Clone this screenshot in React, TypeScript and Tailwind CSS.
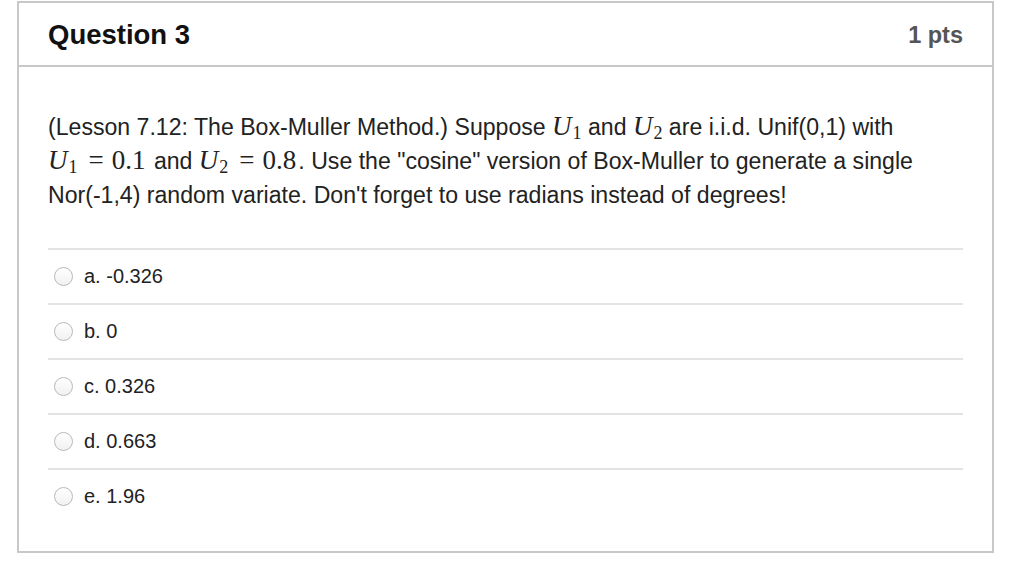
import React from "react";

const answers = ["a. -0.326", "b. 0", "c. 0.326", "d. 0.663", "e. 1.96"];

const Var: React.FC<{ sub: string }> = ({ sub }) => (
  <span className="font-['Liberation_Serif',serif] text-[27px] leading-none">
    <i>U</i>
    <sub className="text-[18px] relative top-[4px] align-baseline ml-[1px]">{sub}</sub>
  </span>
);

const Eq: React.FC<{ value: string }> = ({ value }) => (
  <span className="font-['Liberation_Serif',serif] text-[27px] leading-none mr-[2px]">
    <span className="ml-[11px] mr-[8px]">=</span>
    {value}
  </span>
);

const Radio = () => (
  <span className="inline-block w-[19px] h-[19px] rounded-full border border-[#b9b9b9] bg-gradient-to-b from-white to-[#f1f1f1] shrink-0" />
);

export default function App() {
  return (
    <div className="w-full h-[587px] bg-white pl-[17px] pt-[1px] font-['Liberation_Sans',Arial,sans-serif] text-[#222]">
      <div className="w-[977px] h-[552px] border-2 border-[#c8c8c8] flex flex-col">
        <div className="h-[64px] flex items-center justify-between px-[29px] border-b-2 border-[#c8c8c8] shrink-0">
          <h2 className="text-[27.5px] font-bold text-[#111] pt-[2px]">Question 3</h2>
          <span className="text-[23.5px] font-bold text-[#555] pt-[4px]">1 pts</span>
        </div>
        <div className="px-[29px] pt-[43px]">
          <div className="text-[23.1px] leading-[34px] text-[#222]">
            (Lesson 7.12: The Box-Muller Method.) Suppose <Var sub="1" /> and <Var sub="2" /> are i.i.d. Unif(0,1) with
            <br />
            <Var sub="1" />
            <Eq value="0.1" /> and <Var sub="2" />
            <Eq value="0.8" />. Use the "cosine" version of Box-Muller to generate a single
            <br />
            Nor(-1,4) random variate. Don't forget to use radians instead of degrees!
          </div>
          <div className="mt-[36px]">
            {answers.map((a) => (
              <div
                key={a}
                className="h-[55px] border-t-2 border-[#e3e3e3] flex items-center pl-[6px] gap-[11px]"
              >
                <Radio />
                <span className="text-[20px] text-[#222] pb-[2px]">{a}</span>
              </div>
            ))}
          </div>
        </div>
      </div>
    </div>
  );
}
